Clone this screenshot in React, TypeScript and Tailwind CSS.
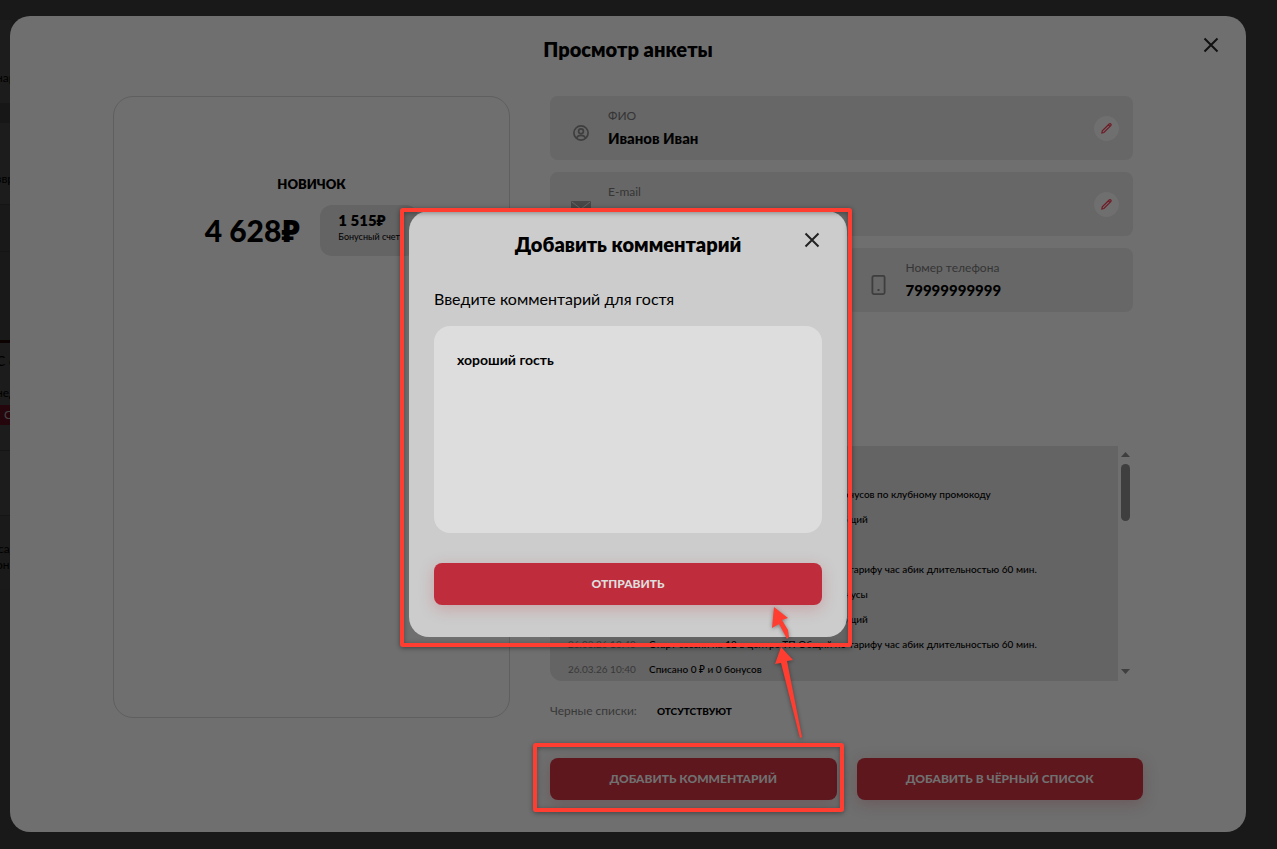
import { useState } from 'react';

interface HistoryItem {
    date: string;
    text: string;
}

const history: HistoryItem[] = [
    { date: '27.03.26 12:15', text: 'Комментарий' },
    { date: '27.03.26 12:14', text: 'Успешное начисление на счет гостя 500 бонусов по клубному промокоду' },
    { date: '26.03.26 11:42', text: 'Завершение сессии на 102 в центре ТП Общий' },
    { date: '26.03.26 11:41', text: 'Вход в клуб' },
    { date: '26.03.26 10:43', text: 'Старт сессии на 12 в центре ТП Общий по тарифу час абик длительностью 60 мин.' },
    { date: '26.03.26 10:43', text: 'Списано 0 ₽ и 0 бонусов, начислены 10 бонусы' },
    { date: '26.03.26 10:41', text: 'Завершение сессии на 102 в центре ТП Общий' },
    { date: '26.03.26 10:40', text: 'Старт сессии на 12 в центре ТП Общий по тарифу час абик длительностью 60 мин.' },
    { date: '26.03.26 10:40', text: 'Списано 0 ₽ и 0 бонусов' },
];

function CloseIcon() {
    return (
        <svg className="w-4 h-4" viewBox="0 0 16 16" fill="none" stroke="currentColor" strokeWidth={2}>
            <path d="M1.5 1.5l13 13M14.5 1.5l-13 13" />
        </svg>
    );
}

function UserIcon() {
    return (
        <svg className="w-4 h-4" viewBox="0 0 16 16" fill="none" stroke="currentColor" strokeWidth={1.7}>
            <circle cx="8" cy="8" r="7.1" />
            <circle cx="8" cy="6.3" r="2.4" />
            <path d="M3.3 13.2c1-2 2.7-2.9 4.7-2.9s3.7.9 4.7 2.9" />
        </svg>
    );
}

function MailIcon() {
    return (
        <svg className="w-5 h-4" viewBox="0 0 20 16">
            <rect width="20" height="16" rx="1" fill="#474747" />
            <path d="M1 1l9 7 9-7" fill="none" stroke="#676767" strokeWidth={1} />
        </svg>
    );
}

function PhoneIcon() {
    return (
        <svg className="w-4 h-5" viewBox="0 0 16 20" fill="none" stroke="currentColor" strokeWidth={1.8}>
            <rect x="1.4" y="0.9" width="12.2" height="18.2" rx="1.5" />
            <rect x="6.5" y="14" width="2" height="2" fill="currentColor" stroke="none" />
        </svg>
    );
}

function PencilIcon() {
    return (
        <svg className="w-3 h-3" viewBox="0 0 12 12" fill="none" stroke="currentColor" strokeWidth={1.2}>
            <path d="M0.9 10.9l.4-2 6.9-6.9a1 1 0 0 1 1.6 1.6l-6.9 6.9zM7.3 2.9l1.6 1.6" />
        </svg>
    );
}

interface FieldProps {
    label: string;
    value: string;
    icon: React.ReactNode;
    editable?: boolean;
}

function Field({ label, value, icon, editable }: FieldProps) {
    return (
        <div className="flex h-16 items-center rounded-lg bg-[#676767] pl-5 pr-3.5">
            <div className="mr-4 flex w-[22px] justify-center pt-2.5 text-[#3e3e3e]">{icon}</div>
            <div className="flex-1">
                <p className="text-xs leading-4 text-[#353535]">{label}</p>
                <p className="mt-[5px] mb-px h-[18px] text-[15px] leading-[18px] font-black text-black">{value}</p>
            </div>
            {editable && (
                <button
                    aria-label={`Изменить ${label}`}
                    className="flex h-[25px] w-[25px] items-center justify-center rounded-full bg-[#6f6f6f] text-[#6f1a25]"
                >
                    <PencilIcon />
                </button>
            )}
        </div>
    );
}

// Slice of the dimmed page that stays visible to the left of the window
function Backdrop() {
    return (
        <div aria-hidden="true" className="absolute inset-y-0 left-0 w-3 overflow-hidden text-xs leading-4 whitespace-nowrap text-black">
            <div className="mt-5 h-[83px] bg-[#1c1c1c] pt-[50px]">
                <p className="-ml-1">нар</p>
            </div>
            <div className="h-5 bg-[#171717]" />
            <div className="h-[82px] border-b border-[#151515] bg-[#1c1c1c] pt-12">
                <p className="-ml-1">звр</p>
            </div>
            <div className="h-[47px] border-b border-[#151515] bg-[#191919]" />
            <div className="h-[88px] bg-[#191919]" />
            <div className="h-[3px] bg-[#0c0202]" />
            <div className="h-[108px] border-b border-[#151515] bg-[#1c1c1c] pt-2">
                <p className="-ml-1 text-sm leading-5">С о</p>
                <p className="mt-3.5 -ml-1">нед</p>
                <p className="mt-1 h-5 bg-[#26060d] pl-1 leading-5 text-[#444]">С</p>
            </div>
            <div className="h-[65px] border-b border-[#151515] bg-[#1c1c1c]" />
            <div className="h-[73px] bg-[#1a1a1a] pt-[25px]">
                <p className="-ml-0.5">сад</p>
                <p className="-ml-1">они</p>
            </div>
        </div>
    );
}

function CommentDialog() {
    const [comment, setComment] = useState('хороший гость');

    return (
        <div
            role="dialog"
            aria-labelledby="comment-title"
            className="relative w-[438px] rounded-[20px] bg-[#ccc] px-[25px] pt-5 pb-8 text-black"
        >
            <h2 id="comment-title" className="pt-px text-center text-xl leading-6 font-extrabold">Добавить комментарий</h2>
            <button aria-label="Закрыть" className="absolute top-[21px] right-[27px] text-[#222]">
                <CloseIcon />
            </button>
            <label htmlFor="comment" className="mt-[31px] block text-base leading-6">Введите комментарий для гостя</label>
            <textarea
                id="comment"
                value={comment}
                onChange={(e) => setComment(e.target.value)}
                className="mt-[15px] block h-[207px] w-full resize-none rounded-2xl bg-[#ddd] px-[23px] py-6 text-sm leading-5 font-bold outline-none"
            />
            <button className="mt-[30px] block h-[42px] w-full rounded-lg bg-[#bf2d3c] text-xs font-black text-[#ddd] shadow-[0_4px_15px_rgba(191,45,60,0.25)]">
                ОТПРАВИТЬ
            </button>
            <div className="pointer-events-none absolute -top-[3px] -right-[5px] -bottom-2.5 -left-[9px] rounded-[3px] border-4 border-[#ff3d30] shadow-[0_1px_5px_rgba(0,0,0,0.45),inset_0_1px_5px_rgba(0,0,0,0.35)]" />
            <svg
                aria-hidden="true"
                className="pointer-events-none absolute -bottom-[103px] left-[362px] h-[140px] w-10 drop-shadow-[0_1px_2px_rgba(0,0,0,0.4)]"
                viewBox="0 0 40 140"
                fill="#ff3d30"
            >
                <path d="M3 7l14 11-6 2 6 10 1 7-2 2-8-15-7 4z" />
                <path d="M10 47l12 13-6 1 15 76-2 1-19-75-6 1z" />
            </svg>
        </div>
    );
}

export default function App() {
    return (
        <div className="relative flex min-h-screen bg-[#191919] pt-4 pr-[31px] pb-[17px] pl-2.5 font-['Lato','Noto_Sans',sans-serif]">
            <Backdrop />
            <main className="relative flex-1 rounded-[20px] bg-[#6f6f6f] px-[103px] pb-8">
                <h1 className="pt-[21px] text-center text-xl leading-6 font-extrabold text-black">Просмотр анкеты</h1>
                <button aria-label="Закрыть анкету" className="absolute top-[21px] right-[27px] text-[#111]">
                    <CloseIcon />
                </button>

                <div className="mt-[35px] grid grid-cols-[397fr_593fr] gap-10">
                    <section className="h-[622px] rounded-[20px] border border-[#5f5f5f] pt-[79px] text-black">
                        <h2 className="text-center text-[13px] leading-4 font-extrabold">НОВИЧОК</h2>
                        <div className="mt-[13px] flex justify-center gap-5">
                            <p className="text-3xl leading-[50px] font-black">4 628₽</p>
                            <div className="h-[51px] w-[98px] rounded-xl bg-[#646464] pt-1.5 pl-[18px]">
                                <p className="text-[15px] leading-[18px] font-extrabold">1 515₽</p>
                                <p className="text-[9px] leading-4">Бонусный счет</p>
                            </div>
                        </div>
                    </section>

                    <section>
                        <div className="mr-2.5 grid grid-cols-2 gap-3">
                            <div className="col-span-2">
                                <Field label="ФИО" value="Иванов Иван" icon={<UserIcon />} editable />
                            </div>
                            <div className="col-span-2">
                                <Field label="E-mail" value="" icon={<MailIcon />} editable />
                            </div>
                            <Field label="Дата" value="" icon={<UserIcon />} />
                            <Field label="Номер телефона" value="79999999999" icon={<PhoneIcon />} />
                        </div>

                        <div className="mt-[134px] mr-2.5 flex h-[235px]">
                            <ul className="flex-1 overflow-hidden rounded-l-xl bg-[#646464] pt-[11px] pl-[18px] text-[10px] leading-[25px] whitespace-nowrap">
                                {history.map((item, index) => (
                                    <li key={index} className="flex">
                                        <span className="w-[81px] text-[#383838]">{item.date}</span>
                                        <span className="font-medium text-black">{item.text}</span>
                                    </li>
                                ))}
                            </ul>
                            <div className="flex w-[15px] flex-col items-center pt-1.5 pb-[7px] text-[#3f3f3f]">
                                <svg className="h-[5px] w-[9px]" viewBox="0 0 9 5" fill="currentColor"><path d="M0 5l4.5-5 4.5 5z" /></svg>
                                <div className="mt-[7px] h-[57px] w-[9px] rounded-full bg-[#3f3f3f]" />
                                <svg className="mt-auto h-[5px] w-[9px]" viewBox="0 0 9 5" fill="currentColor"><path d="M0 0l4.5 5 4.5-5z" /></svg>
                            </div>
                        </div>

                        <p className="mt-[22px] flex gap-5 text-xs leading-4 text-[#383838]">
                            Черные списки:
                            <strong className="text-[10px] font-black text-black">ОТСУТСТВУЮТ</strong>
                        </p>

                        <div className="mt-[39px] grid grid-cols-2 gap-5">
                            <div className="relative">
                                <button className="h-[42px] w-full rounded-lg bg-[#5f171e] text-xs font-black text-[#707070] shadow-[0_4px_15px_rgba(95,23,30,0.25)]">
                                    ДОБАВИТЬ КОММЕНТАРИЙ
                                </button>
                                <div className="pointer-events-none absolute -top-[15px] -right-[7px] -bottom-3 -left-[17px] rounded-[3px] border-4 border-[#ff3d30] shadow-[0_1px_5px_rgba(0,0,0,0.4),inset_0_1px_5px_rgba(0,0,0,0.35)]" />
                            </div>
                            <button className="h-[42px] w-full rounded-lg bg-[#5f171e] text-xs font-black text-[#707070] shadow-[0_4px_15px_rgba(95,23,30,0.25)]">
                                ДОБАВИТЬ В ЧЁРНЫЙ СПИСОК
                            </button>
                        </div>
                    </section>
                </div>

                <div className="absolute inset-0 flex items-center justify-center">
                    <CommentDialog />
                </div>
            </main>
        </div>
    );
}
